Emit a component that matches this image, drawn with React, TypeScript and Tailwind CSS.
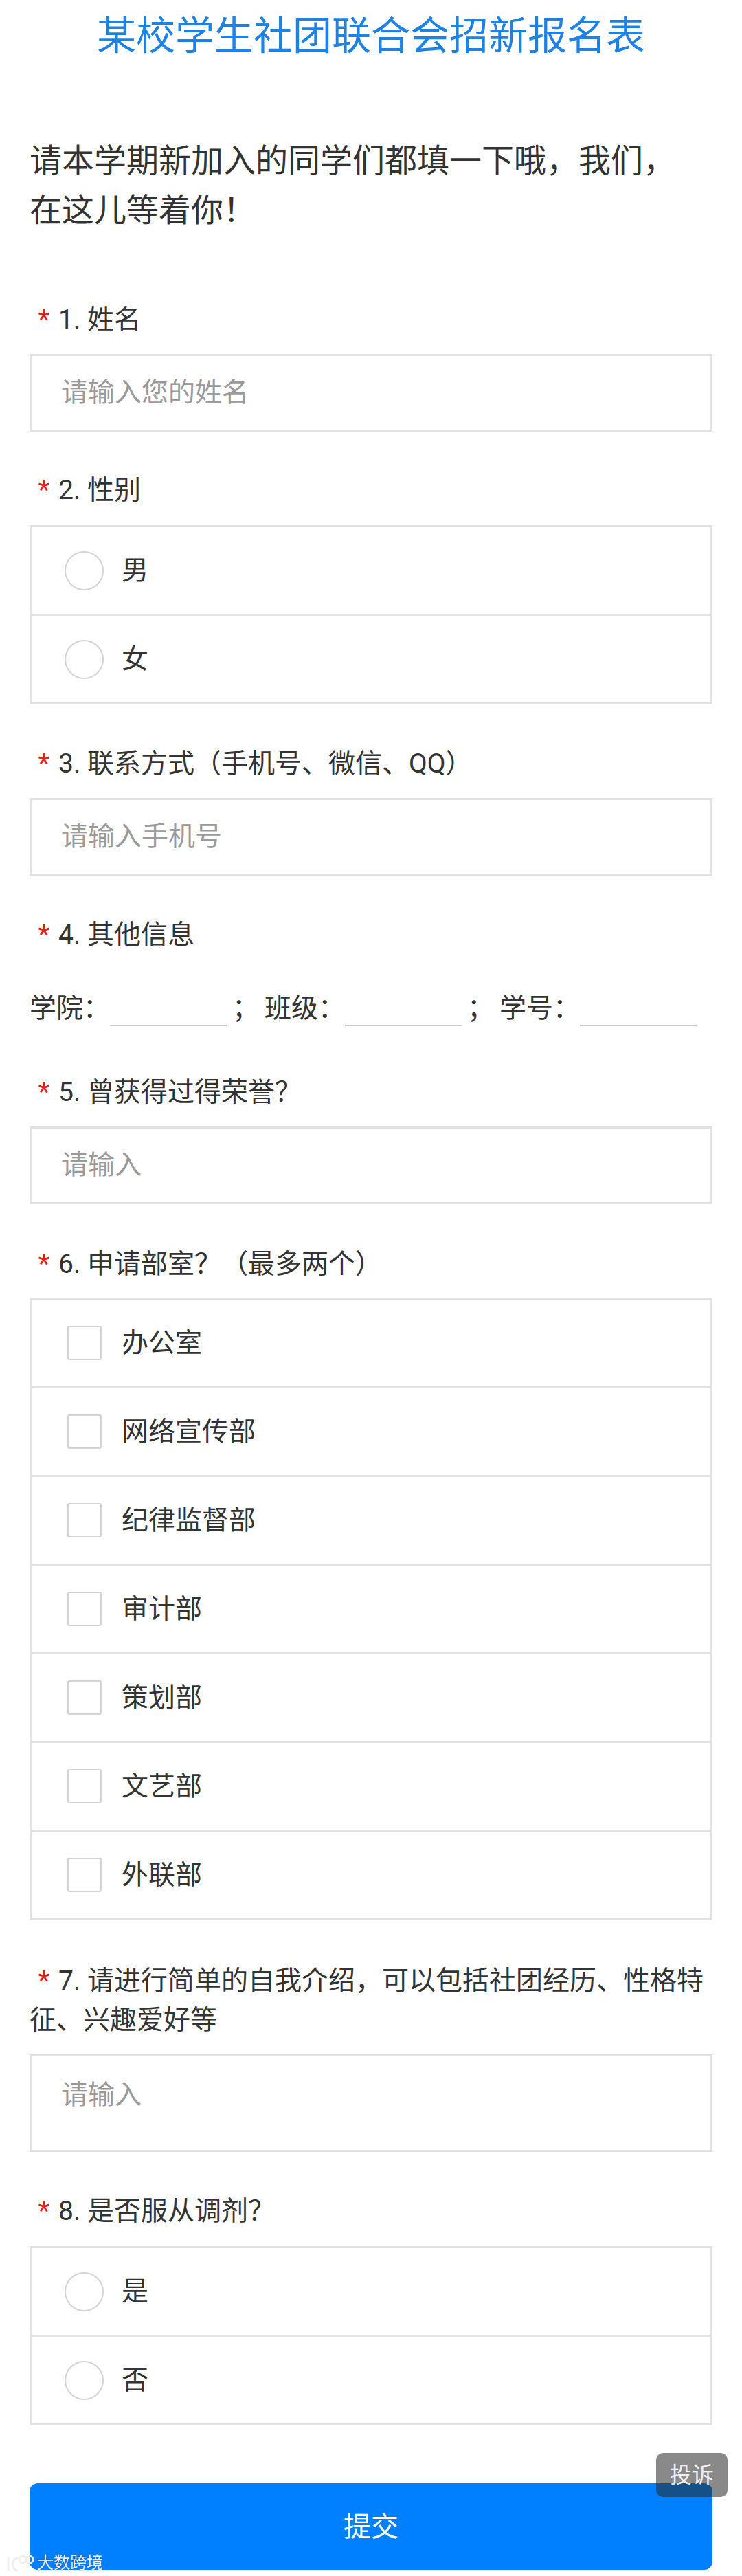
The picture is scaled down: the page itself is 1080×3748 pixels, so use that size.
import React from "react";

const FONT = "font-[Roboto,'Noto_Sans_CJK_SC',sans-serif]";

function Label({ num, children }: { num: string; children: React.ReactNode }) {
  return (
    <div className="text-[39px] leading-[57px] text-[#333]">
      <span className="inline-block w-[42px] text-center text-[#e11d1d]">*</span>
      {num}. {children}
    </div>
  );
}

function InputBox({ placeholder, tall }: { placeholder: string; tall?: boolean }) {
  return (
    <div
      className={
        tall
          ? "mt-[21px] h-[142px] border-[3px] border-[#e2e2e2] pl-[43px] pt-[28px] text-[39px] leading-[57px] text-[#9a9a9a]"
          : "mt-[21px] flex h-[113px] items-center border-[3px] border-[#e2e2e2] pl-[43px] text-[39px] leading-[57px] text-[#9a9a9a]"
      }
    >
      {placeholder}
    </div>
  );
}

function RadioGroup({ options }: { options: string[] }) {
  return (
    <div className="mt-[22px] border-[3px] border-[#e2e2e2]">
      {options.map((o, i) => (
        <div
          key={o}
          className={
            i > 0
              ? "flex h-[129px] items-center border-t-[3px] border-[#e2e2e2] pl-[48px]"
              : "flex h-[126px] items-center pl-[48px]"
          }
        >
          <span className="h-[57px] w-[57px] rounded-full border-[2px] border-[#d4d4d4]" />
          <span className="ml-[26px] text-[39px] leading-[57px] text-[#333]">{o}</span>
        </div>
      ))}
    </div>
  );
}

function CheckGroup({ options }: { options: string[] }) {
  return (
    <div className="mt-[20px] border-[3px] border-[#e2e2e2]">
      {options.map((o, i) => (
        <div
          key={o}
          className={
            i > 0
              ? "flex h-[129px] items-center border-t-[3px] border-[#e2e2e2] pl-[52px]"
              : "flex h-[126px] items-center pl-[52px]"
          }
        >
          <span className="h-[50px] w-[50px] rounded-[3px] border-[2px] border-[#d4d4d4]" />
          <span className="ml-[29px] text-[39px] leading-[57px] text-[#333]">{o}</span>
        </div>
      ))}
    </div>
  );
}

function Blank() {
  return <span className="mb-[3px] h-[2px] w-[170px] self-end bg-[#c9c9c9]" />;
}

export default function App() {
  return (
    <div className={"relative min-h-[3748px] w-[1080px] bg-white " + FONT}>
      <div className="px-[43px] pt-[13px]">
        <h1 className="text-center text-[57px] font-normal leading-[80px] text-[#1e82e4]">
          某校学生社团联合会招新报名表
        </h1>
        <p className="mt-[105px] text-[47px] leading-[72px] text-[#333]">
          请本学期新加入的同学们都填一下哦，我们，
          <br />
          在这儿等着你！
        </p>

        <div className="mt-[95px]">
          <Label num="1">姓名</Label>
          <InputBox placeholder="请输入您的姓名" />
        </div>

        <div className="mt-[57px]">
          <Label num="2">性别</Label>
          <RadioGroup options={["男", "女"]} />
        </div>

        <div className="mt-[58px]">
          <Label num="3">联系方式（手机号、微信、QQ）</Label>
          <InputBox placeholder="请输入手机号" />
        </div>

        <div className="mt-[58px]">
          <Label num="4">其他信息</Label>
          <div className="mt-[50px] flex h-[57px] items-stretch text-[39px] leading-[57px] text-[#333]">
            <span>学院：</span>
            <Blank />
            <span className="mx-[8px]">；</span>
            <span>班级：</span>
            <Blank />
            <span className="mx-[8px]">；</span>
            <span>学号：</span>
            <Blank />
          </div>
        </div>

        <div className="mt-[65px]">
          <Label num="5">曾获得过得荣誉？</Label>
          <InputBox placeholder="请输入" />
        </div>

        <div className="mt-[59px]">
          <Label num="6">申请部室？（最多两个）</Label>
          <CheckGroup
            options={["办公室", "网络宣传部", "纪律监督部", "审计部", "策划部", "文艺部", "外联部"]}
          />
        </div>

        <div className="mt-[60px]">
          <Label num="7">请进行简单的自我介绍，可以包括社团经历、性格特征、兴趣爱好等</Label>
          <InputBox placeholder="请输入" tall />
        </div>

        <div className="mt-[58px]">
          <Label num="8">是否服从调剂？</Label>
          <RadioGroup options={["是", "否"]} />
        </div>

        <button className="mt-[84px] flex h-[126px] w-full items-center justify-center rounded-[12px] bg-[#0080ff] text-[40px] leading-[57px] text-white">
          提交
        </button>
      </div>

      <div className="absolute left-[955px] top-[3569px] flex h-[64px] w-[104px] items-center justify-center rounded-[10px] bg-[rgba(40,40,40,0.55)] text-[32px] leading-[40px] text-[rgba(255,255,255,0.9)]">
        投诉
      </div>

      <div className="absolute left-[6px] top-[3714px] flex items-center gap-[4px] text-[#f2f2f2] [text-shadow:0_0_2px_rgba(0,0,0,0.45)]">
        <svg width="44" height="30" viewBox="0 0 44 30" fill="none" stroke="#eeeeee" strokeWidth="3">
          <path d="M6 6 L6 26" />
          <path d="M20 8 C10 8 10 26 20 26" />
          <circle cx="27" cy="10" r="5" />
          <circle cx="37" cy="10" r="5" />
        </svg>
        <span className="text-[24px] leading-[30px]">大数跨境</span>
      </div>
    </div>
  );
}
